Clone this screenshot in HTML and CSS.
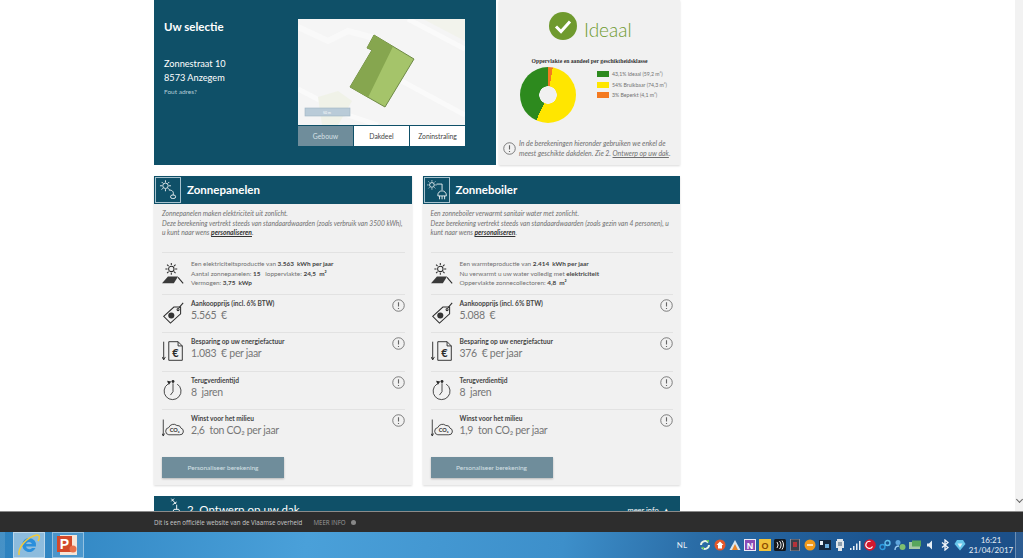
FILE: index.html
```html
<!DOCTYPE html>
<html lang="nl">
<head>
    <meta charset="UTF-8">
    <title>Zonnekaart</title>
    <link rel="stylesheet" href="styles.css">
</head>
<body>
    <svg class="defs" width="0" height="0">
        <symbol id="i-info" viewBox="0 0 14 14">
            <circle cx="7" cy="7" r="6.200" fill="none" stroke="#666" stroke-width=".9"/>
            <path d="M7 3.400v4.800M7 9.600v1.200" stroke="#666" stroke-width="1.200" fill="none"/>
        </symbol>
        <symbol id="i-sun" viewBox="0 0 26 26">
            <g stroke="#2b2b2b" stroke-width="1.200" fill="none">
                <circle cx="11" cy="7" r="3.200"/>
                <path d="M11 0v2.500M11 11.500v2.500M4 7h2.500M15.500 7H18M6 2l1.800 1.800M14.200 10.200L16 12M6 12l1.800-1.800M14.200 3.800L16 2"/>
                <path d="M19 17l6 7"/>
            </g>
            <path d="M7 16h12l-5 8H0z" fill="#3a3a3a"/>
        </symbol>
        <symbol id="i-tag" viewBox="0 0 26 26">
            <g stroke="#2b2b2b" stroke-width="1.200" fill="none">
                <path d="M2 17L14 6h8v8L10 25z"/>
                <circle cx="19" cy="9" r="1.200"/>
                <path d="M20 7l5-6"/>
            </g>
            <circle cx="11" cy="16" r="3.600" fill="#333"/>
        </symbol>
        <symbol id="i-clock" viewBox="0 0 26 26">
            <g stroke="#2b2b2b" stroke-width="1" fill="none">
                <path d="M7 6a10 10 0 1 0 11 0"/>
                <path d="M13 5v10l-3 4"/>
            </g>
            <path d="M6 2l5 1-3 4z" fill="#2b2b2b"/>
            <circle cx="13" cy="3" r="1.700" fill="#2b2b2b"/>
        </symbol>
    </svg>

    <div class="screen">
        <div class="browser">
            <div class="page">
                <section class="top">
                    <div class="selection">
                        <div class="address">
                            <h2>Uw selectie</h2>
                            <p>Zonnestraat 10</p>
                            <p>8573 Anzegem</p>
                            <a class="wrong" href="#">Fout adres?</a>
                        </div>
                        <div class="map-box">
                            <svg class="map" viewBox="0 0 167 106">
                                <rect width="167" height="106" fill="#f5f5f5"/>
                                <path d="M0 8l30 14 20-10 30 8" fill="none" stroke="#f9f9f9" stroke-width="6"/>
                                <path d="M0 70l50 26 30 10M100 60l67 36M110 0l57 30" fill="none" stroke="#fafafa" stroke-width="5"/>
                                <path d="M20 78l20-6 14 10-14 24H24z" fill="#f0f2e8"/>
                                <path d="M125 0h42v22z" fill="#f2f3ec"/>
                                <path d="M76 16l40 24-29 48-35-20 22-37-5-2z" fill="#a5c46a" stroke="#6e8a45" stroke-width="1"/>
                                <path d="M76 16l19 11.500-25 51L52 68l22-37-5-2z" fill="#86a64f"/>
                                <rect x="7" y="89" width="45" height="8" fill="#b9cbd8" stroke="#9fb4c4" stroke-width=".6"/>
                                <text x="29" y="95" class="scale">50 m</text>
                            </svg>
                            <div class="tabs">
                                <span class="tab active">Gebouw</span>
                                <span class="tab">Dakdeel</span>
                                <span class="tab">Zoninstraling</span>
                            </div>
                        </div>
                    </div>
                    <div class="verdict">
                        <div class="verdict-head">
                            <svg class="check" viewBox="0 0 28 28">
                                <circle cx="14" cy="14" r="14" fill="#6f9a2e"/>
                                <path d="M7 14.500l5 5 9-10" fill="none" stroke="#fff" stroke-width="3"/>
                            </svg>
                            <span class="verdict-word">Ideaal</span>
                        </div>
                        <div class="chart-title">Oppervlakte en aandeel per geschiktheidsklasse</div>
                        <div class="chart">
                            <div class="donut"></div>
                            <ul class="legend">
                                <li><i class="swatch green"></i>43,1% Ideaal (59,2 m²)</li>
                                <li><i class="swatch yellow"></i>54% Bruikbaar (74,3 m²)</li>
                                <li><i class="swatch orange"></i>3% Beperkt (4,1 m²)</li>
                            </ul>
                        </div>
                        <div class="note">
                            <svg class="info"><use href="#i-info"/></svg>
                            <p>In de berekeningen hieronder gebruiken we enkel de meest geschikte dakdelen. Zie 2. <u>Ontwerp op uw dak</u>.</p>
                        </div>
                    </div>
                </section>

                <section class="cards">
                    <article class="card">
                        <header class="card-head">
                            <span class="head-icon">
                                <svg viewBox="0 0 26 26">
                                    <g stroke="#fff" stroke-width="1" fill="none">
                                        <circle cx="10" cy="8" r="3.200"/>
                                        <path d="M10 1.500V4M10 12v2.500M3.500 8H6M14 8h2.500M5.500 3.500l1.700 1.700M12.800 10.800l1.700 1.700M5.500 12.500l1.700-1.700M12.800 5.200l1.700-1.700"/>
                                        <path d="M14 13c5 0 6 3 5 6"/>
                                        <rect x="16" y="19" width="6" height="4" rx="2"/>
                                    </g>
                                </svg>
                            </span>
                            <h3>Zonnepanelen</h3>
                        </header>
                        <p class="intro">Zonnepanelen maken elektriciteit uit zonlicht.<br>Deze berekening vertrekt steeds van standaardwaarden (zoals verbruik van 3500 kWh), u kunt naar wens <a href="#">personaliseren</a>.</p>
                        <div class="spec">
                            <svg class="row-icon"><use href="#i-sun"/></svg>
                            <p>Een elektriciteitsproductie van <b>3.563 &nbsp;kWh per jaar</b><br>Aantal zonnepanelen: <b>15</b> &nbsp; loppervlakte: <b>24,5 &nbsp;m²</b><br>Vermogen: <b>3,75 &nbsp;kWp</b></p>
                        </div>
                        <div class="row">
                            <svg class="row-icon"><use href="#i-tag"/></svg>
                            <div class="row-text"><h4>Aankoopprijs (incl. 6% BTW)</h4><div class="value">5.565 &nbsp;€</div></div>
                            <svg class="info"><use href="#i-info"/></svg>
                        </div>
                        <div class="row">
                            <svg class="row-icon" viewBox="0 0 26 26">
                                <g stroke="#2b2b2b" stroke-width="1.100" fill="none">
                                    <path d="M2 2v21M0 20l2 3.500L4 20"/>
                                    <path d="M8 2h11l5 5v17H8z"/>
                                    <path d="M19 2v5h5"/>
                                </g>
                                <text x="16" y="20" class="bill-text">€</text>
                            </svg>
                            <div class="row-text"><h4>Besparing op uw energiefactuur</h4><div class="value">1.083 &nbsp;€ per jaar</div></div>
                            <svg class="info"><use href="#i-info"/></svg>
                        </div>
                        <div class="row">
                            <svg class="row-icon"><use href="#i-clock"/></svg>
                            <div class="row-text"><h4>Terugverdientijd</h4><div class="value">8 &nbsp;jaren</div></div>
                            <svg class="info"><use href="#i-info"/></svg>
                        </div>
                        <div class="row">
                            <svg class="row-icon" viewBox="0 0 26 22">
                                <g stroke="#2b2b2b" stroke-width="1" fill="none">
                                    <path d="M1.500 1v19M0 17.500l1.500 3 1.500-3"/>
                                    <path d="M8 19h13a4 4 0 0 0 1.500-7.800 4.500 4.500 0 0 0-5-3.200 6 6 0 0 0-9.500 2.500A4.300 4.300 0 0 0 8 19z"/>
                                </g>
                                <text x="15" y="16" class="cloud-text">CO₂</text>
                            </svg>
                            <div class="row-text"><h4>Winst voor het milieu</h4><div class="value">2,6 &nbsp;ton CO₂ per jaar</div></div>
                            <svg class="info"><use href="#i-info"/></svg>
                        </div>
                        <a class="btn" href="#">Personaliseer berekening</a>
                    </article>

                    <article class="card">
                        <header class="card-head">
                            <span class="head-icon">
                                <svg viewBox="0 0 26 26">
                                    <g stroke="#fff" stroke-width="1" fill="none">
                                        <circle cx="7" cy="7" r="2.800"/>
                                        <path d="M7 1.500V3M7 11v1.500M1.500 7H3M11 7h1.500M3 3l1 1M10 10l1 1M3 11l1-1M10 4l1-1"/>
                                        <path d="M12.500 6H19v7"/>
                                        <path d="M14 19a5 5 0 0 1 10 0v1H14zM16 20v4M19 20v4M22 20v4"/>
                                    </g>
                                </svg>
                            </span>
                            <h3>Zonneboiler</h3>
                        </header>
                        <p class="intro">Een zonneboiler verwarmt sanitair water met zonlicht.<br>Deze berekening vertrekt steeds van standaardwaarden (zoals gezin van 4 personen), u kunt naar wens <a href="#">personaliseren</a>.</p>
                        <div class="spec">
                            <svg class="row-icon"><use href="#i-sun"/></svg>
                            <p>Een warmteproductie van <b>2.414 &nbsp;kWh per jaar</b><br>Nu verwarmt u uw water volledig met <b>elektriciteit</b><br>Oppervlakte zonnecollectoren: <b>4,8 &nbsp;m²</b></p>
                        </div>
                        <div class="row">
                            <svg class="row-icon"><use href="#i-tag"/></svg>
                            <div class="row-text"><h4>Aankoopprijs (incl. 6% BTW)</h4><div class="value">5.088 &nbsp;€</div></div>
                            <svg class="info"><use href="#i-info"/></svg>
                        </div>
                        <div class="row">
                            <svg class="row-icon" viewBox="0 0 26 26">
                                <g stroke="#2b2b2b" stroke-width="1.100" fill="none">
                                    <path d="M2 2v21M0 20l2 3.500L4 20"/>
                                    <path d="M8 2h11l5 5v17H8z"/>
                                    <path d="M19 2v5h5"/>
                                </g>
                                <text x="16" y="20" class="bill-text">€</text>
                            </svg>
                            <div class="row-text"><h4>Besparing op uw energiefactuur</h4><div class="value">376 &nbsp;€ per jaar</div></div>
                            <svg class="info"><use href="#i-info"/></svg>
                        </div>
                        <div class="row">
                            <svg class="row-icon"><use href="#i-clock"/></svg>
                            <div class="row-text"><h4>Terugverdientijd</h4><div class="value">8 &nbsp;jaren</div></div>
                            <svg class="info"><use href="#i-info"/></svg>
                        </div>
                        <div class="row">
                            <svg class="row-icon" viewBox="0 0 26 22">
                                <g stroke="#2b2b2b" stroke-width="1" fill="none">
                                    <path d="M1.500 1v19M0 17.500l1.500 3 1.500-3"/>
                                    <path d="M8 19h13a4 4 0 0 0 1.500-7.800 4.500 4.500 0 0 0-5-3.200 6 6 0 0 0-9.500 2.500A4.300 4.300 0 0 0 8 19z"/>
                                </g>
                                <text x="15" y="16" class="cloud-text">CO₂</text>
                            </svg>
                            <div class="row-text"><h4>Winst voor het milieu</h4><div class="value">1,9 &nbsp;ton CO₂ per jaar</div></div>
                            <svg class="info"><use href="#i-info"/></svg>
                        </div>
                        <a class="btn" href="#">Personaliseer berekening</a>
                    </article>
                </section>

                <section class="design">
                    <svg class="design-icon" viewBox="0 0 20 24">
                        <g stroke="#fff" stroke-width="1.400" fill="none">
                            <path d="M3 1l7 8M7 1L3 5M5 10l6-4M11 10v7M4 23l3-6h7l3 6z"/>
                        </g>
                    </svg>
                    <h3>2. Ontwerp op uw dak</h3>
                    <span class="more">meer info &nbsp;▲</span>
                </section>
            </div>
            <div class="scrollbar"><span class="scroll-arrow"></span></div>
        </div>

        <footer class="gov-bar">
            <span>Dit is een officiële website van de Vlaamse overheid</span>
            <span class="gov-more">MEER INFO</span>
            <span class="gov-dot"></span>
        </footer>

        <div class="taskbar">
            <div class="task-buttons">
                <span class="task-edge"></span>
                <span class="task-btn">
                    <svg viewBox="0 0 24 24">
                        <path d="M12 5a7 7 0 1 0 6.500 10h-3.500a3.500 3.500 0 0 1-6-1.500h10A7 7 0 0 0 12 5zM9 11a3.200 3.200 0 0 1 6 0z" fill="#2a8fdc"/>
                        <path d="M2 22C1 14 10 4 20 2c3 0 3 3 1 6" fill="none" stroke="#f0c83c" stroke-width="1.600"/>
                    </svg>
                </span>
                <span class="task-btn second">
                    <svg viewBox="0 0 24 24">
                        <rect x="4" y="2" width="17" height="20" fill="#f8e6d8"/>
                        <rect x="1" y="3" width="15" height="16" fill="#d2492a"/>
                        <text x="8.500" y="16" class="ppt-text">P</text>
                        <circle cx="17" cy="16" r="3.500" fill="#e8704a"/>
                    </svg>
                </span>
            </div>
            <div class="tray">
                <span class="lang">NL</span>
                <div class="tray-icons">
                    <svg class="ti" viewBox="0 0 12 12"><path d="M2 6a4 4 0 0 1 7-2.500M10 6a4 4 0 0 1-7 2.500" fill="none" stroke="#e8f3e4" stroke-width="2"/><path d="M7 1h3v3zM2 8h3v3z" fill="#5fc05a"/></svg>
                    <svg class="ti" viewBox="0 0 12 12"><circle cx="6" cy="6" r="5.500" fill="#e3572a"/><path d="M6 2.500L2.500 6H4v3.500h4V6h1.500z" fill="#fff"/></svg>
                    <svg class="ti" viewBox="0 0 12 12"><path d="M6 1l5.500 10H.5z" fill="#d9e6ef"/><path d="M6 5l3 6H3z" fill="#e8862c"/></svg>
                    <svg class="ti" viewBox="0 0 12 12"><rect width="12" height="12" fill="#f1ecf6"/><rect x="1" y="1" width="10" height="10" fill="#8a4bb5"/><text x="6" y="9.500" class="ti-text light">N</text></svg>
                    <svg class="ti" viewBox="0 0 12 12"><rect width="12" height="12" fill="#f2c33a"/><text x="6" y="9.500" class="ti-text amber">O</text></svg>
                    <svg class="ti" viewBox="0 0 12 12"><rect width="12" height="12" rx="1.500" fill="#14181d"/><path d="M3 3a5 5 0 0 1 0 6M5.500 2a6.500 6.500 0 0 1 0 8M8 1.500a8 8 0 0 1 0 9" fill="none" stroke="#f0f0f0"/></svg>
                    <svg class="ti" viewBox="0 0 12 12"><rect x="1.500" width="9" height="12" fill="#39404a" stroke="#a49aa0" stroke-width=".8"/><rect x="4" y="3" width="4" height="5" fill="#b5333a"/></svg>
                    <svg class="ti" viewBox="0 0 12 12"><circle cx="6" cy="6" r="5.500" fill="#f09a1c"/><path d="M3 6h6" stroke="#fff" stroke-width="1.400"/></svg>
                    <svg class="ti" viewBox="0 0 12 12"><rect y="1" width="12" height="10" fill="#14263c"/><rect x="1" y="2" width="3" height="4" fill="#e6eef5"/><rect x="6" y="5" width="4" height="4" fill="#6fb0e0"/></svg>
                    <svg class="ti" viewBox="0 0 12 12"><path d="M3 0h6v2h1v7H8v3H4V9H2V2h1z" fill="#dfe5ea"/><path d="M5 3v4M7 3v4" stroke="#39566f"/></svg>
                    <svg class="ti" viewBox="0 0 12 12"><path d="M1 9h1.500v2H1zM4 7h1.500v4H4zM7 4.500h1.500V11H7zM10 2h1.500v9H10z" fill="#e6eef5"/></svg>
                    <svg class="ti" viewBox="0 0 12 12"><circle cx="6" cy="6" r="5.800" fill="#d3182e"/><path d="M6.500 2.500a3.500 3.500 0 1 0 2 5" fill="none" stroke="#fff" stroke-width="1.200"/></svg>
                    <svg class="ti" viewBox="0 0 12 12"><circle cx="3.500" cy="8" r="2.500" fill="none" stroke="#2f9ce0" stroke-width="1.400"/><circle cx="8.500" cy="4" r="2.500" fill="none" stroke="#5fc0ee" stroke-width="1.400"/></svg>
                    <svg class="ti" viewBox="0 0 12 12"><circle cx="4" cy="3.500" r="2.500" fill="#5fa6de"/><circle cx="8.500" cy="8" r="3" fill="#7fbf6f"/><path d="M1 11c0-3 2-4 4-4" stroke="#9ccbf0" fill="none" stroke-width="1.400"/></svg>
                    <svg class="ti" viewBox="0 0 12 12"><rect y="3" width="11" height="7" fill="#a6c8a6"/><rect x="3" y="1.500" width="9" height="6" fill="#58a65c"/></svg>
                    <svg class="ti" viewBox="0 0 12 12"><path d="M3 4.500h2L8 1.500v9l-3-3H3z" fill="#e6eef5"/></svg>
                    <svg class="ti" viewBox="0 0 12 12"><path d="M3 3.500l6 5-3 2.500V1l3 2.500-6 5" fill="none" stroke="#f1f5f9" stroke-width="1.300"/></svg>
                    <svg class="ti" viewBox="0 0 12 12"><path d="M6 11.500L.5 5 3 1h6l2.500 4z" fill="#66c6ea"/><path d="M3.500 4.500h5L6 8.500z" fill="#d9f2fb"/></svg>
                </div>
                <div class="clock">16:21<br>21/04/2017</div>
                <span class="show-desktop"></span>
            </div>
        </div>
    </div>
</body>
</html>
```

FILE: styles.css
```css
* {
    box-sizing: border-box;
    margin: 0;
    padding: 0;
}

html, body {
    height: 100%;
    overflow: hidden;
}

body {
    font-family: "Lato", "Open Sans", sans-serif;
    color: #707070;
    background-color: #fff;
}

a {
    color: inherit;
    text-decoration: none;
}

.defs {
    display: block;
    height: 0;
}

.screen {
    display: flex;
    flex-direction: column;
    width: 1023px;
    height: 558px;
}

.browser {
    display: flex;
    height: 512px;
    overflow: hidden;
    border-bottom: 1px solid #8b8b8b;
}

.page {
    width: 1015px;
    padding-left: 154px;
    overflow: hidden;
}

.scrollbar {
    display: flex;
    align-items: flex-end;
    justify-content: center;
    width: 8px;
    padding-bottom: 9px;
    background-color: #f2f2f2;
}

.scroll-arrow {
    width: 5px;
    height: 5px;
    border-right: 1px solid #666;
    border-bottom: 1px solid #666;
    transform: rotate(45deg);
}

/* bovenste blok */
.top {
    display: flex;
    gap: 3px;
    width: 526px;
    height: 165px;
}

.selection {
    display: flex;
    width: 342px;
    padding-top: 19px;
    background-color: #0f5068;
    color: #fff;
}

.address {
    width: 144px;
    padding-left: 10px;
}

.address h2 {
    margin-bottom: 23px;
    font-size: 11.500px;
    font-weight: 700;
    line-height: 15px;
}

.address p {
    font-size: 9.200px;
    line-height: 14px;
}

.wrong {
    display: block;
    font-size: 6.500px;
    line-height: 14px;
    color: #b5ccd6;
}

.map-box {
    width: 167px;
}

.map {
    display: block;
    width: 167px;
    height: 106px;
}

.scale {
    font-size: 3.500px;
    fill: #fff;
    text-anchor: middle;
}

.tabs {
    display: flex;
    height: 21px;
    background-color: #fff;
}

.tab {
    flex: 1;
    font-size: 6.800px;
    line-height: 20px;
    text-align: center;
    color: #444;
    border-left: 1px solid #0f5068;
    border-top: 1px solid #0f5068;
}

.tab.active {
    background-color: #6f8d9b;
    color: #d5e0e5;
    border-left: none;
}

.verdict {
    flex: 1;
    background-color: #f1f1f1;
    box-shadow: 0 1px 2px rgba(0, 0, 0, 0.15);
}

.verdict-head {
    display: flex;
    align-items: flex-start;
    gap: 7px;
    padding: 12px 0 0 50px;
    height: 56px;
}

.check {
    width: 28px;
    height: 28px;
    flex: none;
}

.verdict-word {
    margin-top: 6px;
    font-size: 19px;
    font-weight: 300;
    line-height: 24px;
    color: #6f9a2e;
}

.chart-title {
    font-family: "Liberation Serif", serif;
    font-size: 5.700px;
    font-weight: bold;
    line-height: 10px;
    text-align: center;
    color: #333;
}

.chart {
    display: flex;
    gap: 21px;
    padding: 1px 0 0 21px;
    height: 69px;
}

.donut {
    width: 56px;
    height: 56px;
    flex: none;
    border-radius: 50%;
    background: radial-gradient(circle, #f1f1f1 0 8.500px, transparent 9px),
        conic-gradient(#f47a20 0 10deg, #ffe600 10deg 205deg, #2d8a1e 205deg 360deg);
}

.legend {
    padding-top: 2px;
    list-style: none;
    font-size: 5.200px;
    line-height: 10.500px;
}

.legend li {
    display: flex;
    align-items: center;
    gap: 3px;
    white-space: nowrap;
}

.swatch {
    width: 12px;
    height: 6px;
}

.green { background-color: #2d8a1e; }
.yellow { background-color: #ffe600; }
.orange { background-color: #f47a20; }

.note {
    display: flex;
    gap: 3px;
    padding: 3px 4px 0 4px;
}

.note .info {
    flex: none;
    margin-top: 4px;
}

.note p {
    font-size: 6.900px;
    font-style: italic;
    line-height: 10px;
}

.info {
    width: 13px;
    height: 13px;
}

/* kaarten */
.cards {
    display: flex;
    gap: 11px;
    width: 526px;
    margin-top: 11px;
}

.card {
    display: flex;
    flex-direction: column;
    flex: 1;
    height: 309px;
    padding-bottom: 7px;
    background-color: #f1f1f1;
    box-shadow: 0 1px 2px rgba(0, 0, 0, 0.15);
}

.card-head {
    display: flex;
    align-items: center;
    gap: 6px;
    height: 28px;
    padding: 1px;
    background-color: #0f5068;
    color: #fff;
}

.head-icon {
    display: flex;
    align-items: center;
    justify-content: center;
    width: 26px;
    height: 26px;
    border: 1px solid #a8c3cf;
}

.head-icon svg {
    width: 22px;
    height: 22px;
}

.card-head h3 {
    margin-top: -2px;
    font-size: 11.500px;
    font-weight: 700;
}

.intro {
    height: 48px;
    margin: 0 6px 0 8px;
    padding-top: 5px;
    font-size: 6.700px;
    font-style: italic;
    line-height: 9.700px;
}

.intro a {
    font-weight: bold;
    color: #333;
    text-decoration: underline;
}

.spec {
    display: flex;
    align-items: center;
    height: 42px;
    margin: 0 7px 0 8px;
    border-top: 1px solid #e2e2e2;
}

.spec p {
    font-size: 6.400px;
    line-height: 9.500px;
}

.spec b {
    color: #444;
}

.row-icon {
    width: 22px;
    height: 22px;
    flex: none;
    margin-right: 7px;
}

.row {
    display: flex;
    align-items: flex-start;
    height: 38.400px;
    margin: 0 7px 0 8px;
    padding-top: 4px;
    border-top: 1px solid #e2e2e2;
}

.row .row-icon {
    margin-top: 3px;
}

.row-text {
    flex: 1;
}

.row h4 {
    font-size: 6.600px;
    line-height: 9px;
    color: #444;
}

.value {
    font-size: 10.500px;
    letter-spacing: -.3px;
    line-height: 15px;
    color: #777;
}

.bill-text {
    font-size: 13px;
    font-weight: bold;
    fill: #2b2b2b;
    text-anchor: middle;
}

.cloud-text {
    font-size: 6.500px;
    font-weight: bold;
    fill: #2b2b2b;
    text-anchor: middle;
}

.btn {
    width: 122px;
    height: 21px;
    margin: auto 0 0 8px;
    font-size: 6.500px;
    line-height: 21px;
    text-align: center;
    color: #d5e0e5;
    background-color: #6f8d9b;
    box-shadow: 0 1px 2px rgba(0, 0, 0, 0.25);
}

.design {
    display: flex;
    align-items: flex-start;
    width: 526px;
    height: 40px;
    margin-top: 11px;
    padding: 2px 10px 0 15px;
    background-color: #0f5068;
    color: #fff;
}

.design-icon {
    width: 14px;
    height: 16px;
    flex: none;
}

.design h3 {
    margin: 5px 0 0 4px;
    font-size: 11.500px;
    font-weight: 400;
}

.more {
    margin: 8px 0 0 auto;
    font-size: 7.500px;
}

/* footer vlaamse overheid */
.gov-bar {
    display: flex;
    align-items: center;
    height: 20px;
    padding-left: 154px;
    font-family: "Open Sans", sans-serif;
    font-size: 6.200px;
    color: #c8c8c8;
    background-color: #2d2d2d;
}

.gov-more {
    margin-left: 11px;
    color: #9c9c9c;
}

.gov-dot {
    width: 5px;
    height: 5px;
    margin-left: 5px;
    border-radius: 50%;
    background-color: #888;
}

/* windows taakbalk */
.taskbar {
    display: flex;
    justify-content: space-between;
    height: 26px;
    background: linear-gradient(100deg, #2d82bf 0, #4aa0d9 30%, #3d8fca 55%, #2a6ca6 68%, #1c5590 85%, #1c4f88 100%);
}

.task-buttons {
    display: flex;
}

.task-edge {
    width: 5px;
    background-color: rgba(255, 255, 255, 0.12);
}

.task-btn {
    display: flex;
    align-items: center;
    justify-content: center;
    width: 32px;
    margin-left: 8px;
    background-color: rgba(255, 255, 255, 0.45);
    border: 1px solid rgba(255, 255, 255, 0.4);
}

.task-btn.second {
    margin-left: 7px;
    background-color: rgba(255, 255, 255, 0.12);
}

.task-btn svg {
    width: 24px;
    height: 24px;
}

.ppt-text {
    font-family: "Liberation Sans", sans-serif;
    font-size: 14px;
    font-weight: bold;
    fill: #fff;
    text-anchor: middle;
}

.tray {
    display: flex;
    align-items: center;
    color: #e6eef5;
}

.lang {
    margin-right: 12px;
    font-size: 8px;
}

.tray-icons {
    display: flex;
    gap: 3px;
}

.ti {
    display: block;
    width: 12px;
    height: 12px;
}

.ti-text {
    font-family: "Liberation Sans", sans-serif;
    font-size: 9px;
    font-weight: bold;
    text-anchor: middle;
}

.ti-text.light { fill: #fff; }
.ti-text.amber { fill: #8a4a00; }

.clock {
    width: 48px;
    margin-left: 1px;
    font-size: 8px;
    line-height: 10px;
    text-align: center;
}

.show-desktop {
    align-self: stretch;
    width: 8px;
    border-left: 1px solid rgba(255, 255, 255, 0.3);
    background-color: rgba(255, 255, 255, 0.08);
}
```
